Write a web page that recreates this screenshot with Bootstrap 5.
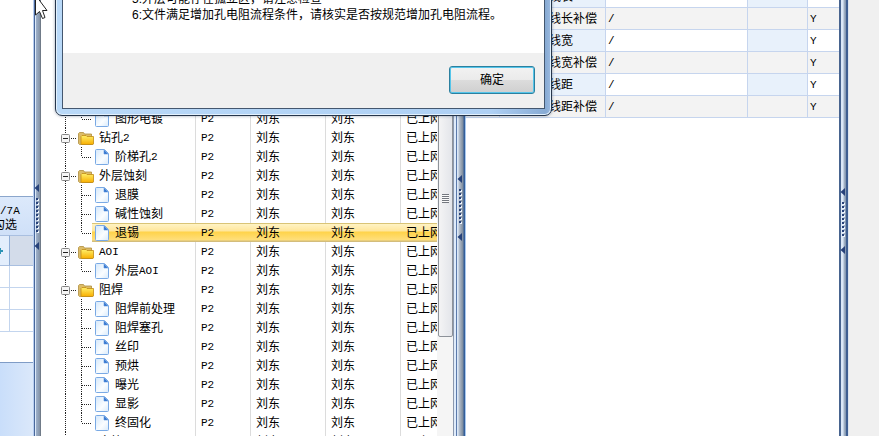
<!DOCTYPE html>
<html lang="zh-CN">
<head>
<meta charset="utf-8">
<meta name="viewport" content="width=device-width, initial-scale=1">
<title>工艺流程</title>
<link href="https://cdn.jsdelivr.net/npm/bootstrap@5.3.0/dist/css/bootstrap.min.css" rel="stylesheet">
<style>
body{font:12px/18px "Liberation Sans","Noto Sans CJK SC",sans-serif;color:#000;background:#f0f0f0}
.latin{font-family:"Liberation Mono",monospace;font-size:11px}
.side-pane{flex:0 0 33px;background:#fff}
.side-blank{height:196px}
.side-head{height:39px;padding:7px 0 0;border-top:1px solid #8ba6cc;background:linear-gradient(#dce9fb,#cfe0f8);line-height:14px}
.side-head .clipline{margin-left:-7px}
.side-grid{width:100%;table-layout:fixed;border-collapse:separate;border-spacing:0}
.side-grid td{height:22px;border-bottom:1px solid #c3d5ee;padding:0}
.side-grid td:first-child{width:10px;border-right:1px solid #c3d5ee}
.side-grid .filter-row td{height:31px;border-color:#a9bfe0;border-top:1px solid #a9bfe0;background:#d3dcea}
.side-grid .filter-row td:first-child{background:#e3eefc;border-right-color:#8fadd6}
.side-grid svg{display:block}
.side-end{height:31px;border-bottom:1px solid #7f9cc6}
.side-foot{background:linear-gradient(90deg,#c9defa,#dbe8fa)}
.bar{flex:0 0 8px;padding-top:184px;background:linear-gradient(90deg,#b8cef0 0 1px,#48679b 1px 2px,#dbe8f8 2px 3px,#9eb1cb 3px,#8392a6 7px,#707b88 7px)}
.bar-mid{flex-basis:13px;padding-top:175px;background:linear-gradient(90deg,#8b98ae 0 1px,#dfebfa 1px 3px,#5b7aab 3px 4px,#dce8f7 4px 5px,#b7c2d0 6px,#7d8b9c 10px,#345f9b 11px 12px,#a9c8ee 12px)}
.bar-right{flex-basis:10px;padding-top:188px;background:linear-gradient(90deg,#48648f 0 2px,#dbe8f8 2px 4px,#a9b8ca 5px,#7c91ad 7px,#3f5f92 7px 9px,#dce5f0 9px)}
.bar svg{display:block}
.tree-pane{flex:0 0 396px;background:#fff;padding-top:109px}
.tree{width:100%;table-layout:fixed;border-collapse:separate;border-spacing:0}
.tree td{height:19px;padding:1px 0 0 5px;line-height:18px;white-space:nowrap;overflow:hidden;border-right:1px solid #dcdcdc}
.tree td:first-child{padding:0;line-height:20px}
.tree td:first-child>div{height:19px}
.tree td:last-child{border-right:0}
.tree svg{display:block;flex:none}
.leaf-art{width:74px;height:19px}.folder-art{width:58px;height:19px}
.tree .picked td{background:linear-gradient(#d9c477 0 1px,#fff3c4 1px,#ffe69b 8px,#ffd34a 9px,#ffdf7c 17px,#d3bd7c 18px);border-color:transparent}
.tree .picked td:first-child{background-position:51px 0;background-repeat:no-repeat;background-origin:border-box}
.scroll{flex:0 0 16px;background:#f5f5f5}
.thumb{height:337px;margin-left:1px;padding:193px 3px 0;border:1px solid #8d9299;border-radius:2px;background:linear-gradient(90deg,#f4f4f5,#e3e5ea)}
.grip{height:9px;background:repeating-linear-gradient(#73777f 0 1px,#fafafa 1px 2px)}
.data-pane{flex:1 1 373px;min-width:0;background:#fff}
.params{width:100%;margin-top:-14px;table-layout:fixed;border-collapse:separate;border-spacing:0}
.params td{height:22px;padding:1px 0 0 2px;line-height:20px;border-right:1px solid #c6d5ee;border-bottom:1px solid #c6d5ee;white-space:nowrap;overflow:hidden}
.params td:last-child{border-right:0}
.params td.tag{padding-left:49px}
.params tr:nth-child(odd) .tint{background:#e8f1fb}
.params tr:nth-child(even) td{background:#f3f3f3}
.spare{flex:0 0 30px}
.message{left:55px;top:-20px;width:497px;height:136px;padding:0 6px 6px;border:1px solid #26364b;border-radius:7px;background:linear-gradient(90deg,#b9d9f8 0 6px,#aed0f4 88%,#88abd4 99%,#9dbbe0);box-shadow:0 0 3px rgba(40,60,90,.5),inset 0 0 0 1px #e3f1fd}
.message-body{height:128px;border:1px solid #44576f;background:#fff}
.message-text{height:71px;padding:9px 0 0 69px;line-height:16px}
.message-foot{height:55px;padding:13px 9px;background:#f0f0f0}
.ok{width:86px;height:28px;border:1px solid #2c809f;border-radius:3px;background:linear-gradient(#f2f2f2,#ebebeb 48%,#dcdcdc 50%,#cfcfcf);box-shadow:inset 0 0 0 1px #55c5ea;line-height:24px}
.pointer{left:35px;top:-2px}
</style>
<script src="https://cdn.jsdelivr.net/npm/bootstrap@5.3.0/dist/js/bootstrap.bundle.min.js"></script>
</head>
<body class="vh-100 overflow-hidden position-relative">
<svg width="0" height="0" class="position-absolute" aria-hidden="true">
<defs>
<linearGradient id="paper" x1="0" y1="0" x2="1" y2="1"><stop offset="0" stop-color="#d5e8fb"/><stop offset=".6" stop-color="#fafdff"/><stop offset="1" stop-color="#d8eafb"/></linearGradient>
<linearGradient id="gold" x1="0" y1="0" x2="0" y2="1"><stop offset="0" stop-color="#fff06a"/><stop offset="1" stop-color="#f8ae00"/></linearGradient>
<symbol id="page" viewBox="0 0 14 16"><path d="M1.5.5H9.5L13.5 4.5V14.5Q13.5 15.5 12.5 15.5H1.5Q.5 15.5.5 14.5V1.5Q.5.5 1.5.5Z" fill="url(#paper)" stroke="#79a9e4"/><path d="M9 1V5H13Z" fill="#3476cf" stroke="#5b94de" stroke-width=".6"/></symbol>
<symbol id="folder" viewBox="0 0 16 13"><path d="M.5 11.500V1.500L1.500.5H5.500L6.500 2H13.500V12.500H1.500Z" fill="#dcbc68" stroke="#b08e3e" stroke-width=".8"/><path d="M3 4.500L4 3.500H8L9 4.500H15.500V12L15 12.500H3.500L3 12Z" fill="url(#gold)" stroke="#c08a14" stroke-width=".8"/></symbol>
<symbol id="leaf" viewBox="0 0 74 19"><path d="M24.5 0V19M40.5 0V19M41 10.5H50" stroke="#222" stroke-dasharray="1 1"/><use href="#page" x="54" y="2" width="14" height="16"/></symbol>
<symbol id="leafEnd" viewBox="0 0 74 19"><path d="M24.5 0V19M40.5 0V10M41 10.5H50" stroke="#222" stroke-dasharray="1 1"/><use href="#page" x="54" y="2" width="14" height="16"/></symbol>
<symbol id="branch" viewBox="0 0 58 19"><path d="M24.5 0V6M24.5 15V19M30 10.5H35" stroke="#222" stroke-dasharray="1 1"/><rect x="20.5" y="6.5" width="8" height="8" rx="1" fill="#f5f5f5" stroke="#858585"/><path d="M22 10.5H27" stroke="#222"/><use href="#folder" x="37" y="4" width="16" height="13"/></symbol>
<symbol id="handle" viewBox="0 0 8 68"><path d="M6 0V8L1.500 4ZM6 58V66L1.500 62Z" fill="#27427a"/><path d="M5 15V51" stroke="#edf4fd" stroke-width="2" stroke-dasharray="2 2"/><path d="M4 14V50" stroke="#27427a" stroke-width="2" stroke-dasharray="2 2"/></symbol>
</defs>
</svg>
<main class="d-flex h-100">
<section class="side-pane d-flex flex-column overflow-hidden">
<div class="side-blank"></div>
<div class="side-head text-nowrap"><div class="latin">/7A</div><div class="clipline">勾选</div></div>
<table class="side-grid"><tbody><tr class="filter-row"><td><svg width="4" height="8" aria-hidden="true"><path d="M0 4H3M0 1V7" stroke="#2b93b5" stroke-width="2"/></svg></td><td></td></tr><tr><td></td><td></td></tr><tr><td></td><td></td></tr><tr><td></td><td></td></tr></tbody></table>
<div class="side-end"></div>
<div class="side-foot flex-grow-1"></div>
</section>
<div class="bar"><svg width="8" height="68"><use href="#handle"/></svg></div>
<section class="tree-pane overflow-hidden">
<table class="tree">
<colgroup><col width="155"><col width="55"><col width="75"><col width="75"><col></colgroup>
<tbody>
<tr><td><div class="d-flex"><svg class="leaf-art"><use href="#leafEnd"/></svg>图形电镀</div></td><td class="latin">P2</td><td>刘东</td><td>刘东</td><td>已上网</td></tr>
<tr><td><div class="d-flex"><svg class="folder-art"><use href="#branch"/></svg>钻孔<span class="latin">2</span></div></td><td class="latin">P2</td><td>刘东</td><td>刘东</td><td>已上网</td></tr>
<tr><td><div class="d-flex"><svg class="leaf-art"><use href="#leafEnd"/></svg>阶梯孔<span class="latin">2</span></div></td><td class="latin">P2</td><td>刘东</td><td>刘东</td><td>已上网</td></tr>
<tr><td><div class="d-flex"><svg class="folder-art"><use href="#branch"/></svg>外层蚀刻</div></td><td class="latin">P2</td><td>刘东</td><td>刘东</td><td>已上网</td></tr>
<tr><td><div class="d-flex"><svg class="leaf-art"><use href="#leaf"/></svg>退膜</div></td><td class="latin">P2</td><td>刘东</td><td>刘东</td><td>已上网</td></tr>
<tr><td><div class="d-flex"><svg class="leaf-art"><use href="#leaf"/></svg>碱性蚀刻</div></td><td class="latin">P2</td><td>刘东</td><td>刘东</td><td>已上网</td></tr>
<tr class="picked"><td><div class="d-flex"><svg class="leaf-art"><use href="#leafEnd"/></svg>退锡</div></td><td class="latin">P2</td><td>刘东</td><td>刘东</td><td>已上网</td></tr>
<tr><td><div class="d-flex"><svg class="folder-art"><use href="#branch"/></svg><span class="latin">AOI</span></div></td><td class="latin">P2</td><td>刘东</td><td>刘东</td><td>已上网</td></tr>
<tr><td><div class="d-flex"><svg class="leaf-art"><use href="#leafEnd"/></svg>外层<span class="latin">AOI</span></div></td><td class="latin">P2</td><td>刘东</td><td>刘东</td><td>已上网</td></tr>
<tr><td><div class="d-flex"><svg class="folder-art"><use href="#branch"/></svg>阻焊</div></td><td class="latin">P2</td><td>刘东</td><td>刘东</td><td>已上网</td></tr>
<tr><td><div class="d-flex"><svg class="leaf-art"><use href="#leaf"/></svg>阻焊前处理</div></td><td class="latin">P2</td><td>刘东</td><td>刘东</td><td>已上网</td></tr>
<tr><td><div class="d-flex"><svg class="leaf-art"><use href="#leaf"/></svg>阻焊塞孔</div></td><td class="latin">P2</td><td>刘东</td><td>刘东</td><td>已上网</td></tr>
<tr><td><div class="d-flex"><svg class="leaf-art"><use href="#leaf"/></svg>丝印</div></td><td class="latin">P2</td><td>刘东</td><td>刘东</td><td>已上网</td></tr>
<tr><td><div class="d-flex"><svg class="leaf-art"><use href="#leaf"/></svg>预烘</div></td><td class="latin">P2</td><td>刘东</td><td>刘东</td><td>已上网</td></tr>
<tr><td><div class="d-flex"><svg class="leaf-art"><use href="#leaf"/></svg>曝光</div></td><td class="latin">P2</td><td>刘东</td><td>刘东</td><td>已上网</td></tr>
<tr><td><div class="d-flex"><svg class="leaf-art"><use href="#leaf"/></svg>显影</div></td><td class="latin">P2</td><td>刘东</td><td>刘东</td><td>已上网</td></tr>
<tr><td><div class="d-flex"><svg class="leaf-art"><use href="#leafEnd"/></svg>终固化</div></td><td class="latin">P2</td><td>刘东</td><td>刘东</td><td>已上网</td></tr>
<tr><td><div class="d-flex"><svg class="folder-art"><use href="#branch"/></svg>字符</div></td><td class="latin">P2</td><td>刘东</td><td>刘东</td><td>已上网</td></tr>
</tbody>
</table>
</section>
<div class="scroll"><div class="thumb"><div class="grip"></div></div></div>
<div class="bar bar-mid"><svg width="13" height="68"><use href="#handle" x="3" width="8"/></svg></div>
<section class="data-pane overflow-hidden">
<table class="params">
<colgroup><col width="34"><col width="106"><col><col width="60"><col width="31"></colgroup>
<tbody>
<tr><td></td><td class="tag tint">线长</td><td class="latin">/</td><td class="tint"></td><td class="latin">Y</td></tr>
<tr><td></td><td class="tag">线长补偿</td><td class="latin">/</td><td></td><td class="latin">Y</td></tr>
<tr><td></td><td class="tag tint">线宽</td><td class="latin">/</td><td class="tint"></td><td class="latin">Y</td></tr>
<tr><td></td><td class="tag">线宽补偿</td><td class="latin">/</td><td></td><td class="latin">Y</td></tr>
<tr><td></td><td class="tag tint">线距</td><td class="latin">/</td><td class="tint"></td><td class="latin">Y</td></tr>
<tr><td></td><td class="tag">线距补偿</td><td class="latin">/</td><td></td><td class="latin">Y</td></tr>
</tbody>
</table>
</section>
<div class="bar bar-right"><svg width="10" height="68"><use href="#handle" width="8"/></svg></div>
<div class="spare"></div>
</main>
<div class="message position-absolute" role="dialog" aria-label="提示">
<div class="message-body">
<div class="message-text">5:外层可能存在孤立区，请注意检查<br>6:文件满足增加孔电阻流程条件，请核实是否按规范增加孔电阻流程。</div>
<div class="message-foot d-flex justify-content-end"><button type="button" class="ok p-0">确定</button></div>
</div>
</div>
<svg class="pointer position-absolute" width="13" height="22" aria-hidden="true"><path d="M.5 -3V17L4.500 13.500 7.500 20.500 10 19.500 7.500 12.500H12Z" fill="#fff" stroke="#222"/></svg>
</body>
</html>
